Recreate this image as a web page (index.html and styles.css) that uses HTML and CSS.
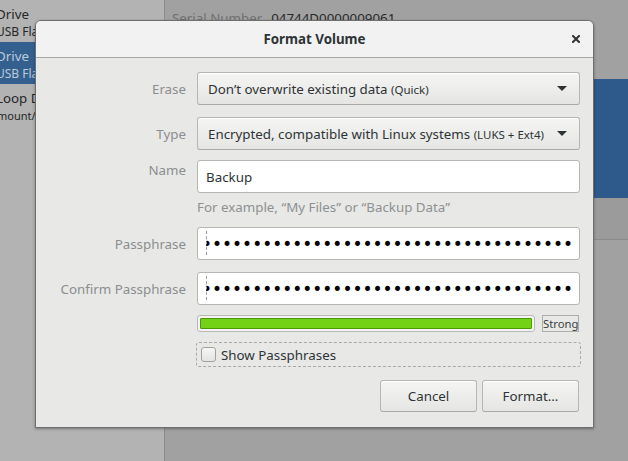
FILE: index.html
```html
<!DOCTYPE html>
<html>
<head>
<meta charset="utf-8">
<title>Format Volume</title>
<link rel="stylesheet" href="styles.css">
</head>
<body>
<div class="desktop">
  <aside class="sidebar">
    <div class="drive"><div class="d-name">Drive</div><div class="d-sub">USB Flash Drive</div></div>
    <div class="drive selected"><div class="d-name">Drive</div><div class="d-sub">USB Flash Drive</div></div>
    <div class="drive"><div class="d-name">Loop Device</div><div class="d-sub sub-small">mount/media.img</div></div>
  </aside>
  <main class="content">
    <div class="info"><span class="info-label">Serial Number</span><span class="info-value">04744D0000009061</span></div>
    <div class="vol-selected"></div>
    <div class="vol-rest"></div>
  </main>
</div>

<div class="dialog">
  <header class="titlebar">
    <span></span>
    <span class="title">Format Volume</span>
    <span class="close-wrap"><button class="close" aria-label="Close"><svg width="8" height="8" viewBox="0 0 8 8"><path d="M1 1L7 7M7 1L1 7" stroke="#2e3436" stroke-width="2" stroke-linecap="square"/></svg></button></span>
  </header>
  <div class="body">
    <div class="row r-erase">
      <span class="lbl">Erase</span>
      <div class="combo"><span>Don’t overwrite existing data <small>(Quick)</small></span><svg class="arrow" width="10" height="5" viewBox="0 0 10 5"><path d="M0 0H10L5 5Z" fill="#2e3436"/></svg></div>
    </div>
    <div class="row r-type">
      <span class="lbl">Type</span>
      <div class="combo"><span>Encrypted, compatible with Linux systems <small>(LUKS + Ext4)</small></span><svg class="arrow" width="10" height="5" viewBox="0 0 10 5"><path d="M0 0H10L5 5Z" fill="#2e3436"/></svg></div>
    </div>
    <div class="row r-name">
      <span class="lbl lbl-top">Name</span>
      <div class="field">
        <div class="entry">Backup</div>
        <div class="hint">For example, “My Files” or “Backup Data”</div>
      </div>
    </div>
    <div class="row r-pass">
      <span class="lbl">Passphrase</span>
      <div class="entry pass"><div class="dots"><span>•••••••••••••••••••••••••••••••••••••••</span></div></div>
    </div>
    <div class="row r-confirm">
      <span class="lbl">Confirm Passphrase</span>
      <div class="entry pass"><div class="dots"><span>•••••••••••••••••••••••••••••••••••••••</span></div></div>
    </div>
    <div class="row r-meter">
      <span></span>
      <div class="meter-line">
        <div class="meter"><div class="fill"></div></div>
        <div class="strong">Strong</div>
      </div>
    </div>
    <div class="row r-check">
      <span></span>
      <div class="check-frame"><span class="checkbox"></span><span class="check-label">Show Passphrases</span></div>
    </div>
    <div class="buttons">
      <button class="btn">Cancel</button>
      <button class="btn">Format…</button>
    </div>
  </div>
</div>
</body>
</html>
```

FILE: styles.css
```css
* { box-sizing: border-box; }

body {
  margin: 0;
  width: 628px;
  height: 461px;
  overflow: hidden;
  position: relative;
  font-family: "Noto Sans", "DejaVu Sans", sans-serif;
  font-size: 13.33px;
  color: #2e3436;
  background: #a1a1a1;
}

.desktop {
  display: flex;
  height: 461px;
}

.sidebar {
  width: 165px;
  flex: none;
  background: #b3b3b3;
  border-right: 1px solid #8c8c8c;
  overflow: hidden;
}

.drive {
  height: 42px;
  padding-top: 5px;
  white-space: nowrap;
  color: #262626;
}

.drive > div { margin-left: -4px; }

.d-name { font-size: 13.33px; line-height: 18px; }
.d-sub { font-size: 12px; line-height: 17px; }
.drive > .sub-small { font-size: 11px; margin-left: -3px; }

.selected {
  background: #34608f;
  color: #bccad9;
}

.content {
  flex: 1;
  display: flex;
  flex-direction: column;
  background: #a1a1a1;
}

.info {
  height: 79px;
  padding: 9px 0 0 7px;
  line-height: 18px;
  white-space: nowrap;
}

.info-label { color: #707070; margin-right: 9px; }
.info-value { color: #2a2a2a; }

.vol-selected { height: 119px; background: #2e5a8b; }
.vol-rest { height: 42px; background: #9b9b9b; border-bottom: 1px solid #8a8a8a; }

/* dialog window */
.dialog {
  position: absolute;
  left: 35px;
  top: 20px;
  width: 559px;
  height: 408px;
  background: #e8e8e7;
  border: 1px solid #6f6f6f;
  border-radius: 6px 6px 0 0;
  box-shadow: 0 1px 3px rgba(0, 0, 0, 0.35);
  display: flex;
  flex-direction: column;
}

.titlebar {
  height: 37px;
  flex: none;
  display: grid;
  grid-template-columns: 1fr auto 1fr;
  align-items: center;
  background: #f2f2f2;
  border-bottom: 1px solid #a8a8a6;
  border-radius: 5px 5px 0 0;
}

.title {
  font-weight: bold;
  color: #2e3436;
}

.close-wrap {
  display: flex;
  justify-content: flex-end;
  padding-right: 5px;
}

.close {
  width: 24px;
  height: 24px;
  border: 0;
  padding: 0;
  background: transparent;
  display: flex;
  align-items: center;
  justify-content: center;
}

.body {
  flex: 1;
  padding: 14px 13px 0 0;
  display: flex;
  flex-direction: column;
}

.row {
  display: grid;
  grid-template-columns: 150px 383px;
  column-gap: 11px;
}

.r-type { margin-top: 12px; }
.r-name { margin-top: 10px; }
.r-pass { margin-top: 11px; }
.r-confirm { margin-top: 12px; }
.r-meter { margin-top: 10px; }
.r-check { margin-top: 10px; }

.lbl {
  text-align: right;
  color: #8b8e8e;
  align-self: center;
  white-space: nowrap;
}

.lbl-top {
  align-self: start;
  line-height: 20px;
}

.combo {
  height: 33px;
  border: 1px solid #b6b6b3;
  border-bottom-color: #a9a9a6;
  border-radius: 3px;
  background: linear-gradient(#f5f5f4, #e5e5e3);
  box-shadow: inset 0 1px #ffffff;
  padding: 0 12px 0 10px;
  display: flex;
  align-items: center;
  justify-content: space-between;
  white-space: nowrap;
}

.combo small { font-size: 11.5px; }

.arrow { flex: none; }

.entry {
  height: 33px;
  background: #ffffff;
  border: 1px solid #b6b6b3;
  border-radius: 3px;
  padding-left: 8px;
  display: flex;
  align-items: center;
  color: #2e3436;
}

.hint {
  margin-top: 6px;
  line-height: 17px;
  color: #8e9191;
}

.pass { position: relative; }

.pass::before {
  content: "";
  position: absolute;
  left: 8px;
  top: 3px;
  bottom: 4px;
  border-left: 1px dashed #9a9a9a;
}

.dots {
  width: 366px;
  overflow: hidden;
  white-space: nowrap;
  font-family: "DejaVu Sans", sans-serif;
  font-size: 17px;
  line-height: 19px;
  letter-spacing: 0;
  color: #000000;
  margin-top: 1px;
}

.dots span {
  display: inline-block;
  margin-left: -4px;
}

.meter-line {
  display: flex;
  align-items: center;
}

.meter {
  width: 338px;
  height: 17px;
  border: 1px solid #b8b8b5;
  border-radius: 3px;
  background: #f4f4f4;
  padding: 2px;
}

.fill {
  height: 100%;
  background: #73d216;
  border: 1px solid #4e9a06;
  border-radius: 1px;
}

.strong {
  width: 37px;
  height: 17px;
  margin-left: 7px;
  border: 1px solid #adadab;
  font-size: 11.3px;
  line-height: 15px;
  text-align: center;
  color: #3a3f40;
}

.check-frame {
  height: 25px;
  margin: 0 -1px;
  border: 1px dashed #a9a9a9;
  border-radius: 3px;
  padding-left: 4px;
  display: flex;
  align-items: center;
}

.checkbox {
  width: 15px;
  height: 15px;
  border: 1px solid #a1a19e;
  border-radius: 3px;
  background: linear-gradient(#f6f6f5, #e4e4e2);
  margin-top: -1px;
}

.check-label {
  margin-left: 5px;
  color: #2e3436;
}

.buttons {
  margin-top: 13px;
  display: flex;
  justify-content: flex-end;
  gap: 5px;
  padding-right: 1px;
}

.btn {
  width: 97px;
  height: 32px;
  border: 1px solid #b6b6b3;
  border-bottom-color: #a9a9a6;
  border-radius: 3px;
  background: linear-gradient(#f5f5f4, #e5e5e3);
  box-shadow: inset 0 1px #ffffff;
  font-family: inherit;
  font-size: 13.33px;
  color: #2e3436;
  padding: 0;
}
```
